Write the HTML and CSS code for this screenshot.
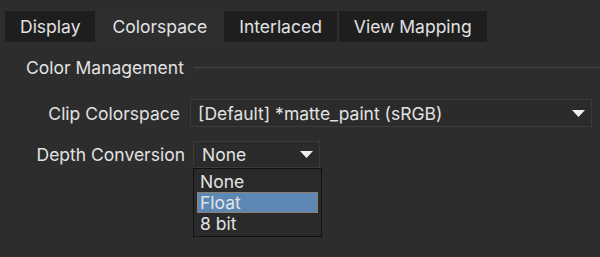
FILE: index.html
```html
<!DOCTYPE html>
<html lang="en">
<head>
    <meta charset="UTF-8">
    <title>Clip Properties</title>
    <link rel="stylesheet" href="styles.css">
</head>
<body>
    <div class="panel">
        <div class="tabs">
            <div class="tab">Display</div>
            <div class="tab active">Colorspace</div>
            <div class="tab">Interlaced</div>
            <div class="tab">View Mapping</div>
        </div>

        <div class="group-title">
            <span>Color Management</span>
            <div class="rule"></div>
        </div>

        <div class="row row-clip">
            <label class="label">Clip Colorspace</label>
            <div class="combo combo-wide">
                <span>[Default] *matte_paint (sRGB)</span>
                <svg class="arrow" width="13" height="7" viewBox="0 0 13 7"><polygon points="0,0 13,0 6.5,7" fill="#f0f0f0"/></svg>
            </div>
        </div>

        <div class="row row-depth">
            <label class="label">Depth Conversion</label>
            <div class="combo combo-small">
                <span>None</span>
                <svg class="arrow" width="13" height="7" viewBox="0 0 13 7"><polygon points="0,0 13,0 6.5,7" fill="#f0f0f0"/></svg>
                <ul class="popup">
                    <li>None</li>
                    <li class="selected">Float</li>
                    <li>8 bit</li>
                </ul>
            </div>
        </div>
    </div>
</body>
</html>
```

FILE: styles.css
```css
body {
    margin: 0;
    background-color: #2d2d2d;
    font-family: Inter, "Noto Sans", sans-serif;
    font-size: 17.5px;
    color: #e2e2e2;
    width: 600px;
    height: 257px;
    overflow: hidden;
}

.panel {
    padding-top: 11px;
}

.tabs {
    display: flex;
    padding-left: 5px;
    gap: 2px;
}

.tab {
    height: 31px;
    line-height: 31px;
    padding: 0 15px;
    background-color: #1e1e1e;
}

.tab.active {
    background-color: #2e2e2e;
}

.group-title {
    display: flex;
    align-items: center;
    margin-top: 14px;
    padding-left: 26px;
    height: 22px;
}

.group-title .rule {
    flex: 1;
    height: 1px;
    margin-left: 10px;
    background-color: #454545;
}

.row {
    display: flex;
    align-items: center;
}

.label {
    text-align: right;
}

.row-clip {
    margin-top: 21px;
}

.row-clip .label {
    width: 180px;
}

.row-depth {
    margin-top: 14px;
}

.row-depth .label {
    width: 185px;
}

.combo {
    position: relative;
    display: flex;
    align-items: center;
    justify-content: space-between;
    box-sizing: border-box;
    border: 1px solid #3b3b3b;
    background-color: #2b2b2b;
}

.combo-wide {
    margin-left: 10px;
    width: 402px;
    height: 28px;
    padding: 0 6px 0 7px;
}

.combo-small {
    margin-left: 8px;
    width: 127px;
    height: 27px;
    padding: 0 6px 0 8px;
}

.popup {
    position: absolute;
    top: 26px;
    left: -1px;
    width: 129px;
    box-sizing: border-box;
    margin: 0;
    padding: 2px 3px;
    list-style: none;
    background-color: #2a2a2a;
    border: 1px solid #111;
}

.popup li {
    height: 21px;
    line-height: 21px;
    padding-left: 3px;
}

.popup li.selected {
    background-color: #5d88b6;
    outline: 1px dotted #c07a30;
    outline-offset: -1px;
}
```
